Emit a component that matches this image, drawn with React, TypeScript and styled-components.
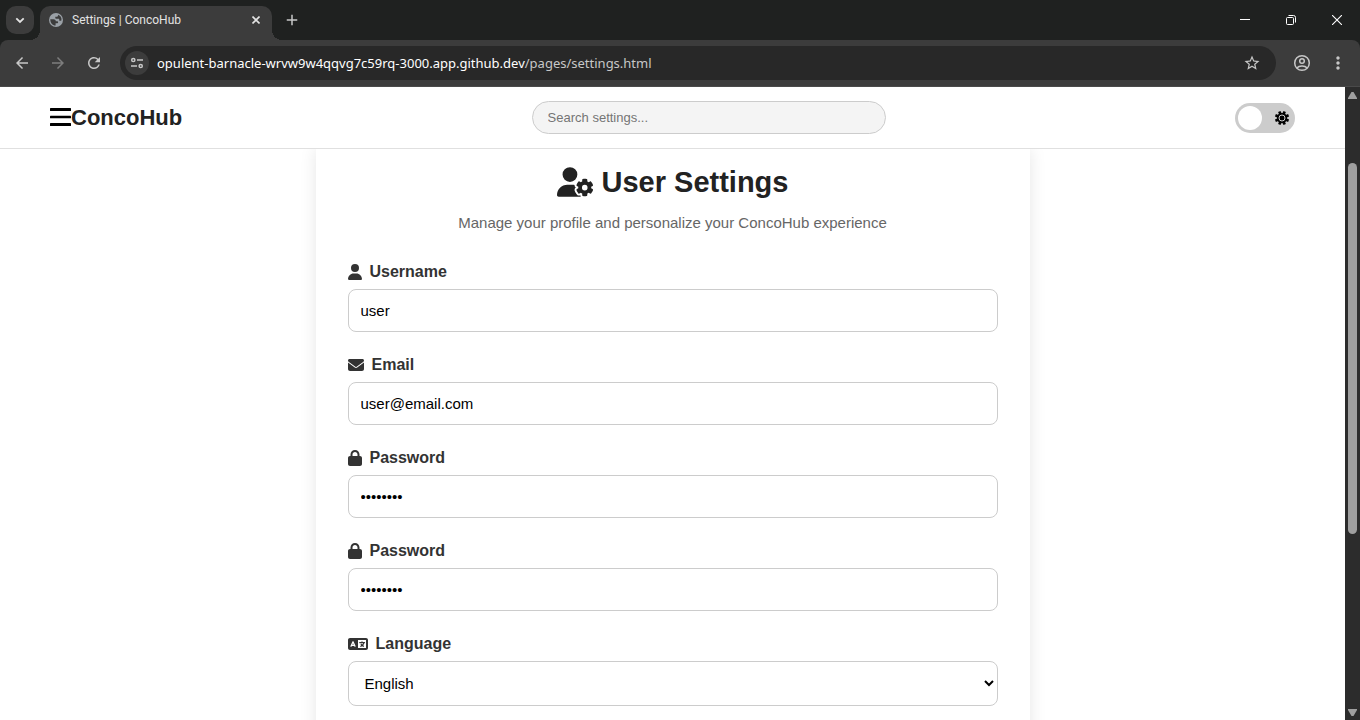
import React from "react";
import styled, { createGlobalStyle } from "styled-components";
import { FaUser, FaUserGear, FaEnvelope, FaLock, FaLanguage } from "react-icons/fa6";
import {
  MdArrowBack,
  MdArrowForward,
  MdRefresh,
  MdStarBorder,
  MdMoreVert,
  MdAdd,
} from "react-icons/md";

const GlobalStyle = createGlobalStyle`
  *, *::before, *::after { box-sizing: border-box; }
  body {
    margin: 0;
    background: #fff;
    font-family: "Liberation Sans", Arial, sans-serif;
    overflow: hidden;
  }
  button { font: inherit; color: inherit; cursor: pointer; }
`;

const Window = styled.div`
  height: 100vh;
  display: flex;
  flex-direction: column;
`;

const TabStrip = styled.div`
  flex: none;
  height: 40px;
  display: flex;
  align-items: flex-end;
  padding-left: 6px;
  background: #1f2120;
  color: #e3e3e3;
`;

const ChromeButton = styled.button<{ $size?: number; $bg?: string; $dim?: boolean }>`
  flex: none;
  width: ${(p) => p.$size ?? 28}px;
  height: ${(p) => p.$size ?? 28}px;
  display: flex;
  align-items: center;
  justify-content: center;
  padding: 0;
  border: 0;
  border-radius: 10px;
  background: ${(p) => p.$bg ?? "transparent"};
  color: ${(p) => (p.$dim ? "#7d7d7d" : "#c7c7c7")};
`;

const TabSearch = styled(ChromeButton)`
  align-self: center;
  margin-right: 6px;
`;

const Tab = styled.div`
  position: relative;
  width: 232px;
  height: 34px;
  display: flex;
  align-items: center;
  padding: 0 6px 6px 8px;
  border-radius: 10px 10px 0 0;
  background: #3c3c3c;

  &::before,
  &::after {
    content: "";
    position: absolute;
    bottom: 0;
    width: 10px;
    height: 10px;
  }
  &::before {
    left: -10px;
    background: radial-gradient(circle at 0 0, transparent 10px, #3c3c3c 10px);
  }
  &::after {
    right: -10px;
    background: radial-gradient(circle at 100% 0, transparent 10px, #3c3c3c 10px);
  }
`;

const TabTitle = styled.span`
  flex: 1;
  margin-left: 8px;
  font: 12px/16px Roboto, "Open Sans", sans-serif;
  white-space: nowrap;
`;

const NewTab = styled(ChromeButton)`
  align-self: center;
  margin-left: 6px;
`;

const WindowControls = styled.div`
  margin-left: auto;
  align-self: stretch;
  display: flex;
`;

const WindowButton = styled.button`
  width: 46px;
  display: flex;
  align-items: center;
  justify-content: center;
  padding: 0;
  border: 0;
  background: transparent;
  color: #fff;
`;

const ToolbarBack = styled.div`
  flex: none;
  background: #1f2120;
`;

const Toolbar = styled.div`
  height: 47px;
  display: flex;
  align-items: center;
  gap: 8px;
  padding: 0 8px;
  border-bottom: 1px solid #4a4a4a;
  border-radius: 8px 8px 0 0;
  background: #3c3c3c;
`;

const AddressBar = styled.div`
  flex: 1;
  height: 34px;
  display: flex;
  align-items: center;
  margin: 0 4px;
  padding: 0 10px 0 5px;
  border-radius: 17px;
  background: #282828;
`;

const SiteInfo = styled(ChromeButton)`
  border-radius: 50%;
`;

const Address = styled.span`
  flex: 1;
  margin-left: 8px;
  color: #fff;
  font: 13px/20px "Noto Sans", "Open Sans", sans-serif;
  white-space: nowrap;
`;

const AddressPath = styled.span`
  color: #c7c7c7;
`;

const Viewport = styled.div`
  flex: 1;
  min-height: 0;
  display: flex;
`;

const Page = styled.div`
  flex: 1;
  min-width: 0;
  display: flex;
  flex-direction: column;
  overflow: hidden;
  background: #fff;
`;

const Header = styled.header`
  flex: none;
  height: 62px;
  display: flex;
  align-items: center;
  justify-content: space-between;
  padding: 0 50px;
  border-bottom: 1px solid #e0e0e0;
  background: #fff;
`;

const Brand = styled.div`
  display: flex;
  align-items: center;
`;

const MenuButton = styled.button`
  display: flex;
  padding: 0;
  border: 0;
  background: transparent;
  color: #000;
`;

const BrandName = styled.span`
  color: #222;
  font-size: 22px;
  font-weight: 700;
  line-height: 26px;
`;

const SearchInput = styled.input`
  width: 354px;
  height: 33px;
  padding: 0 15px;
  border: 1px solid #ccc;
  border-radius: 20px;
  background: #f4f4f4;
  font: 13px/16px "Liberation Sans", Arial, sans-serif;
  outline: none;

  &::placeholder { color: #757575; }
`;

const ToggleLabel = styled.label`
  position: relative;
  width: 60px;
  height: 30px;
  display: flex;
  align-items: center;
  justify-content: space-between;
  padding: 0 5px 0 3px;
  border-radius: 15px;
  background: #ccc;
  cursor: pointer;
`;

const ToggleInput = styled.input`
  position: absolute;
  inset: 0;
  margin: 0;
  opacity: 0;
`;

const ToggleKnob = styled.span`
  width: 24px;
  height: 24px;
  border-radius: 50%;
  background: #fff;
`;

const Content = styled.main`
  flex: 1;
  min-height: 0;
  display: flex;
  justify-content: center;
  overflow: hidden;
`;

const Card = styled.section`
  width: 714px;
  min-height: 800px;
  padding: 14px 32px 32px;
  background: #fff;
  box-shadow: 0 0 16px rgba(0, 0, 0, 0.1);
`;

const Title = styled.h1`
  display: flex;
  align-items: center;
  justify-content: center;
  gap: 8px;
  margin: 0;
  color: #222;
  font-size: 29px;
  line-height: 38px;

  svg { width: 37px; height: 30px; }
`;

const Subtitle = styled.p`
  margin: 12px 0 30px;
  color: #666;
  font-size: 15px;
  line-height: 20px;
  text-align: center;
`;

const Field = styled.div`
  display: flex;
  flex-direction: column;
  gap: 8px;
  margin-bottom: 24px;
`;

const FieldLabel = styled.label<{ $iconWidth: number }>`
  display: flex;
  align-items: center;
  gap: 8px;
  color: #333;
  font-size: 16px;
  font-weight: 700;
  line-height: 18px;

  svg { width: ${(p) => p.$iconWidth}px; height: 16px; }
`;

const TextInput = styled.input`
  width: 100%;
  height: 43px;
  padding: 0 12px;
  border: 1px solid #ccc;
  border-radius: 8px;
  background: #fff;
  color: #000;
  font: 15px/18px "Liberation Sans", Arial, sans-serif;
`;

const SelectInput = styled.select`
  width: 100%;
  height: 45px;
  padding: 0 12px;
  border: 1px solid #ccc;
  border-radius: 8px;
  background: #fff;
  color: #000;
  font: 15px/18px "Liberation Sans", Arial, sans-serif;
`;

const ScrollTrack = styled.div`
  flex: none;
  width: 15px;
  display: flex;
  flex-direction: column;
  align-items: center;
  padding: 5px 0 4px;
  background: #2c2c2c;
  color: #9f9f9f;
`;

const ScrollSpace = styled.div`
  flex: 1;
  width: 9px;
  min-height: 0;
  padding-top: 64px;
`;

const ScrollThumb = styled.div`
  height: 68%;
  border-radius: 5px;
  background: #9f9f9f;
`;

const GlobeIcon = () => (
  <svg width="16" height="16" viewBox="0 0 16 16" aria-hidden="true">
    <circle cx="8" cy="8" r="7" fill="#9aa0a6" />
    <path
      d="M2.300 7.200h3.200c1.700 0 2.300 1 2.300 2h1.400c.6 0 .9.500.9 1s-.4 1.100-1.100 1.100H7.600v2.300C4.500 13.500 2.200 10.600 2.300 7.200zM10 2.700v.8c0 .9-.7 1.300-1.500 1.300H7.300v1.100c0 .5.3.8.8.8h2.200c.8 0 1 .6 1 1.200v.9h1.900c1-2.500-.6-5.300-3.200-6.100z"
      fill="#3c3c3c"
    />
  </svg>
);

const TuneIcon = () => (
  <svg width="14" height="14" viewBox="0 0 14 14" fill="none" stroke="currentColor" strokeWidth="1.500" aria-hidden="true">
    <circle cx="3.300" cy="4" r="1.600" />
    <path d="M7 4h6M1 10h6" />
    <circle cx="10.700" cy="10" r="1.600" />
  </svg>
);

const ProfileIcon = () => (
  <svg width="18" height="18" viewBox="0 0 18 18" fill="none" stroke="currentColor" strokeWidth="1.500" aria-hidden="true">
    <circle cx="9" cy="9" r="7.300" />
    <circle cx="9" cy="7" r="2.300" />
    <path d="M3.800 14c1.300-1.500 3.100-2.100 5.200-2.100s3.900.6 5.200 2.100" />
  </svg>
);

const SunIcon = () => (
  <svg width="16" height="16" viewBox="0 0 16 16" aria-hidden="true">
    <circle cx="8" cy="8" r="5.200" fill="#000" />
    <g stroke="#000" strokeWidth="2.600">
      <path d="M5.300 1.400L10.700 14.600M10.700 1.400L5.300 14.600M1.400 5.300L14.600 10.700M14.600 5.300L1.400 10.700" />
    </g>
    <circle cx="8" cy="8" r="3" fill="none" stroke="#ccc" strokeWidth="1" />
  </svg>
);

const MenuIcon = () => (
  <svg width="21" height="19" viewBox="0 0 21 19" fill="currentColor" aria-hidden="true">
    <rect width="21" height="3" rx=".5" />
    <rect y="7.700" width="21" height="2.600" rx=".5" />
    <rect y="15" width="21" height="3" rx=".5" />
  </svg>
);

const Arrow = ({ down = false }: { down?: boolean }) => (
  <svg width="9" height="7" viewBox="0 0 9 7" fill="currentColor" aria-hidden="true">
    <path d={down ? "M0 0h9v1L5.500 7h-2L0 1z" : "M0 7h9V6L5.500 0h-2L0 6z"} />
  </svg>
);

const FIELDS = [
  { id: "username", label: "Username", type: "text", value: "user", icon: <FaUser viewBox="0 0 448 512" />, iconWidth: 14 },
  { id: "email", label: "Email", type: "email", value: "user@email.com", icon: <FaEnvelope />, iconWidth: 16 },
  { id: "password", label: "Password", type: "password", value: "password", icon: <FaLock />, iconWidth: 14 },
  { id: "password-confirm", label: "Password", type: "password", value: "password", icon: <FaLock />, iconWidth: 14 },
];

const BrowserChrome = () => (
  <>
    <TabStrip>
      <TabSearch $bg="#3c3c3c" aria-label="Search tabs">
        <svg width="10" height="10" viewBox="0 0 10 10" fill="none" stroke="#e3e3e3" strokeWidth="1.800">
          <path d="M1.300 3.300L5 7l3.700-3.700" />
        </svg>
      </TabSearch>
      <Tab>
        <GlobeIcon />
        <TabTitle>Settings | ConcoHub</TabTitle>
        <ChromeButton $size={20} aria-label="Close tab">
          <svg width="8" height="8" viewBox="0 0 8 8" stroke="#e3e3e3" strokeWidth="1.600">
            <path d="M.5.5l7 7M7.500.5l-7 7" />
          </svg>
        </ChromeButton>
      </Tab>
      <NewTab aria-label="New tab">
        <MdAdd size={18} />
      </NewTab>
      <WindowControls>
        <WindowButton aria-label="Minimize">
          <svg width="10" height="10" viewBox="0 0 10 10"><path d="M0 4.500h10" stroke="currentColor" /></svg>
        </WindowButton>
        <WindowButton aria-label="Restore">
          <svg width="10" height="10" viewBox="0 0 10 10" fill="none" stroke="currentColor">
            <rect x=".5" y="2.500" width="7" height="7" rx="1" />
            <path d="M2.500.5h5a2 2 0 0 1 2 2v5" />
          </svg>
        </WindowButton>
        <WindowButton aria-label="Close">
          <svg width="10" height="10" viewBox="0 0 10 10"><path d="M0 0l10 10M10 0L0 10" stroke="currentColor" strokeWidth="1.100" /></svg>
        </WindowButton>
      </WindowControls>
    </TabStrip>
    <ToolbarBack>
      <Toolbar>
        <ChromeButton aria-label="Back"><MdArrowBack size={18} /></ChromeButton>
        <ChromeButton $dim aria-label="Forward"><MdArrowForward size={18} /></ChromeButton>
        <ChromeButton aria-label="Reload"><MdRefresh size={18} /></ChromeButton>
        <AddressBar>
          <SiteInfo $size={24} $bg="#3c3c3c" aria-label="Site information"><TuneIcon /></SiteInfo>
          <Address>
            opulent-barnacle-wrvw9w4qqvg7c59rq-3000.app.github.dev<AddressPath>/pages/settings.html</AddressPath>
          </Address>
          <ChromeButton aria-label="Bookmark"><MdStarBorder size={18} /></ChromeButton>
        </AddressBar>
        <ChromeButton aria-label="Profile"><ProfileIcon /></ChromeButton>
        <ChromeButton aria-label="Browser menu"><MdMoreVert size={20} /></ChromeButton>
      </Toolbar>
    </ToolbarBack>
  </>
);

export default function App() {
  return (
    <Window>
      <GlobalStyle />
      <BrowserChrome />
      <Viewport>
        <Page>
          <Header>
            <Brand>
              <MenuButton aria-label="Open menu"><MenuIcon /></MenuButton>
              <BrandName>ConcoHub</BrandName>
            </Brand>
            <SearchInput type="search" placeholder="Search settings..." aria-label="Search settings" />
            <ToggleLabel>
              <ToggleInput type="checkbox" aria-label="Dark mode" />
              <ToggleKnob />
              <SunIcon />
            </ToggleLabel>
          </Header>
          <Content>
            <Card>
              <Title><FaUserGear />User Settings</Title>
              <Subtitle>Manage your profile and personalize your ConcoHub experience</Subtitle>
              {FIELDS.map((f) => (
                <Field key={f.id}>
                  <FieldLabel htmlFor={f.id} $iconWidth={f.iconWidth}>{f.icon}{f.label}</FieldLabel>
                  <TextInput id={f.id} type={f.type} defaultValue={f.value} />
                </Field>
              ))}
              <Field>
                <FieldLabel htmlFor="language" $iconWidth={20}><FaLanguage />Language</FieldLabel>
                <SelectInput id="language" defaultValue="English">
                  <option>English</option>
                </SelectInput>
              </Field>
            </Card>
          </Content>
        </Page>
        <ScrollTrack>
          <Arrow />
          <ScrollSpace><ScrollThumb /></ScrollSpace>
          <Arrow down />
        </ScrollTrack>
      </Viewport>
    </Window>
  );
}
